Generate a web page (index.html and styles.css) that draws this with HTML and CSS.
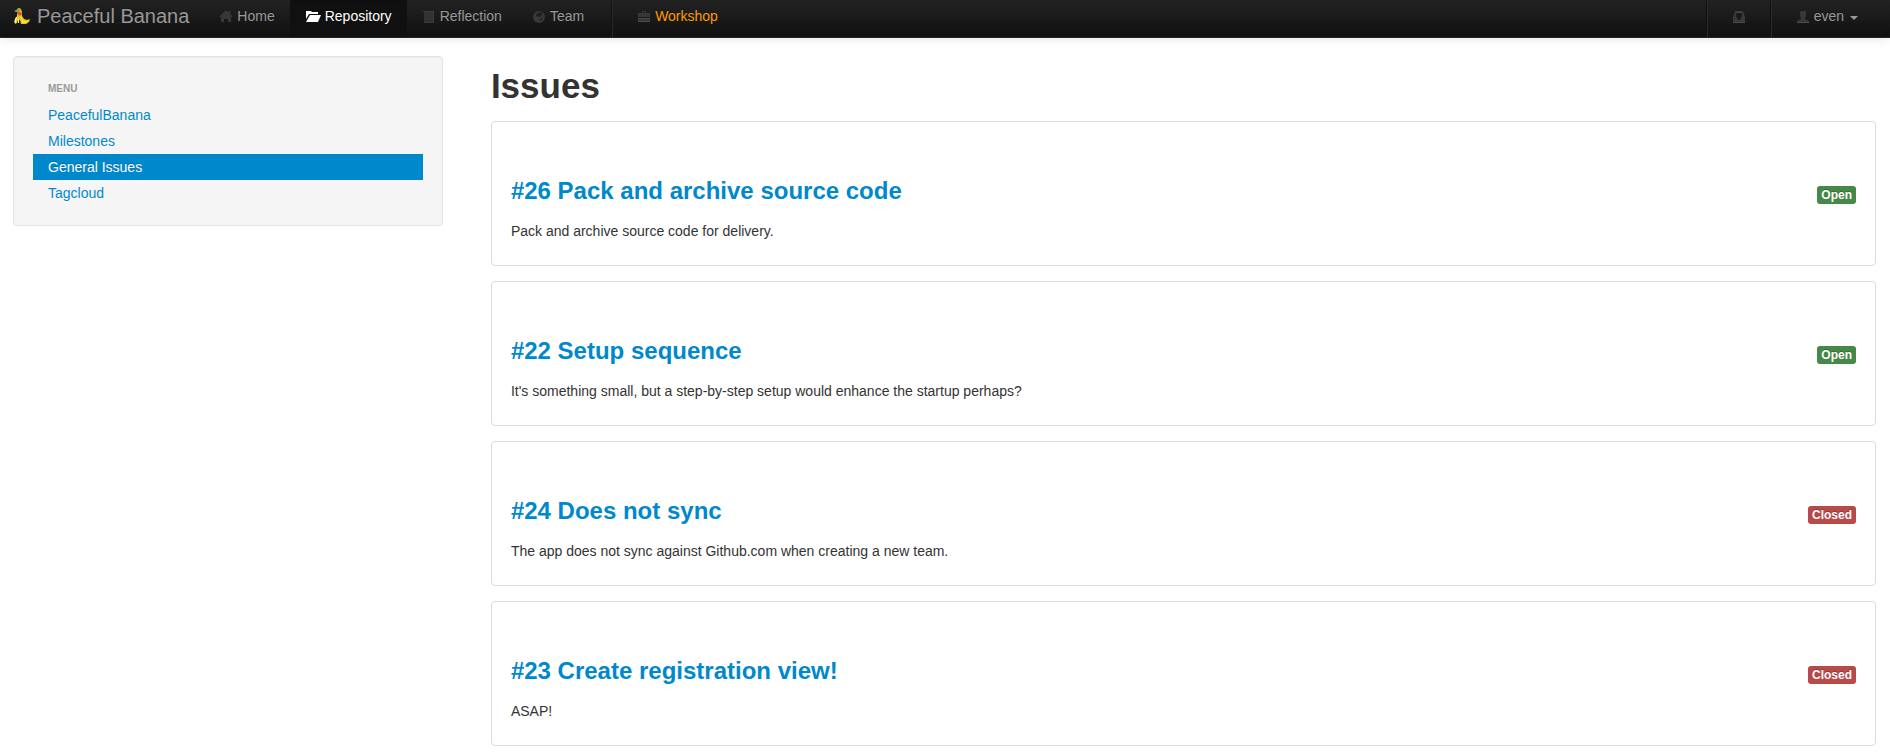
FILE: index.html
```html
<!DOCTYPE html>
<html lang="en">
<head>
<meta charset="utf-8">
<title>Peaceful Banana</title>
<link rel="stylesheet" href="styles.css">
</head>
<body>
<header class="navbar">
  <a class="brand" href="#">
    <svg class="logo" viewBox="0 0 18 18" aria-hidden="true">
      <path fill="#e8c52c" d="M4 2l2-1 2 1 1 3 0 4 2 3 3 1 3-1-1 3-3 2H8l-1-4-2 0-1 3-2 1 0-4 2-4z"/>
      <path fill="#7da53a" d="M1 4l4-2 3 1-2 2-3 0z"/>
      <path fill="#d9534a" d="M4 5h4l1 2-2 2-3-2z"/>
      <path fill="#fff3a0" d="M2 12l1-2 1 0-1 5-2 1zM5 12h1l0 4H5z"/>
      <path fill="#f9e02e" d="M8 9l2 4 3 1 3-1-3 3H9z"/>
    </svg>
    Peaceful Banana
  </a>
  <nav class="nav nav-left" aria-label="Main">
    <a class="nav-link" href="#">
      <svg class="icon" viewBox="0 0 14 14" aria-hidden="true"><path d="M7 1l2.500 2.500V2h2v3.500L14 8h-2v5H9V10H5V13H2V8H0z"/></svg>
      Home
    </a>
    <a class="nav-link active" href="#" aria-current="page">
      <svg class="icon wide" viewBox="0 0 16 14" aria-hidden="true"><path d="M1 2h5l1 1h6v2H4L1 10zM5 6h11l-3 7H1z"/></svg>
      Repository
    </a>
    <a class="nav-link" href="#">
      <svg class="icon" viewBox="0 0 14 14" aria-hidden="true"><path d="M2 3h9v10H2z" opacity=".8"/><path class="shine" d="M1 2h10v1H1zM11 2h1v12h-1zM2 13h9v1H2z" opacity=".7"/></svg>
      Reflection
    </a>
    <a class="nav-link" href="#">
      <svg class="icon" viewBox="0 0 14 14" aria-hidden="true"><circle cx="7" cy="8" r="6"/><path class="cut" d="M6 4l3-1 2 2-2 1 1 1-2 1-2-1-1 1-1-2zM8 10l3-1-1 2-2 1z"/></svg>
      Team
    </a>
    <span class="divider"></span>
    <a class="nav-link highlight" href="#">
      <svg class="icon" viewBox="0 0 14 14" aria-hidden="true"><path fill-rule="evenodd" d="M5 2h4v2h4v4H1V4h4zM6 3v1h2V3zM1 9h12v4H1z"/><path class="shine" d="M1 12h12v1H1zM1 9h12v1H1z"/></svg>
      Workshop
    </a>
  </nav>
  <nav class="nav nav-right" aria-label="Account">
    <span class="divider"></span>
    <a class="nav-link" href="#" aria-label="Inbox">
      <svg class="icon" viewBox="0 0 14 14" aria-hidden="true"><path fill-rule="evenodd" d="M3 2h8l2 6v6H1V8zM4 4v4h1v2h1v1h2v-1h1V8h1V4z"/><path class="shine" d="M4 3h6v1H4zM1 13h12v1H1z"/></svg>
    </a>
    <span class="divider"></span>
    <a class="nav-link" href="#">
      <svg class="icon" viewBox="0 0 14 14" aria-hidden="true"><path d="M5 2h4l1 1v4L9 9v1l4 2v2H1v-2l4-2V9L4 7V3z"/><path class="shine" d="M1 13h12v1H1z"/></svg>
      even
      <span class="caret"></span>
    </a>
  </nav>
</header>
<div class="layout">
  <aside class="well">
    <h2 class="menu-title">Menu</h2>
    <ul class="menu">
      <li><a href="#">PeacefulBanana</a></li>
      <li><a href="#">Milestones</a></li>
      <li><a class="active" href="#" aria-current="page">General Issues</a></li>
      <li><a href="#">Tagcloud</a></li>
    </ul>
  </aside>
  <main class="content">
    <h1>Issues</h1>
    <article class="issue">
      <header><h3><a href="#">#26 Pack and archive source code</a></h3><span class="label open">Open</span></header>
      <p>Pack and archive source code for delivery.</p>
    </article>
    <article class="issue">
      <header><h3><a href="#">#22 Setup sequence</a></h3><span class="label open">Open</span></header>
      <p>It's something small, but a step-by-step setup would enhance the startup perhaps?</p>
    </article>
    <article class="issue">
      <header><h3><a href="#">#24 Does not sync</a></h3><span class="label closed">Closed</span></header>
      <p>The app does not sync against Github.com when creating a new team.</p>
    </article>
    <article class="issue">
      <header><h3><a href="#">#23 Create registration view!</a></h3><span class="label closed">Closed</span></header>
      <p>ASAP!</p>
    </article>
  </main>
</div>
</body>
</html>
```

FILE: styles.css
```css
* { box-sizing: border-box; }
body {
  margin: 0;
  background: #fff;
  color: #333;
  font: 14px/20px "Liberation Sans", Arial, sans-serif;
}
a { color: #08c; text-decoration: none; }
h1, h2, h3, p, ul { margin: 0; padding: 0; }

.navbar {
  display: flex;
  padding: 0 17px 0 13px;
  background: linear-gradient(#222, #111);
  border-bottom: 1px solid #252525;
  box-shadow: 0 1px 10px rgba(0, 0, 0, 0.1);
}
.brand, .nav-link {
  display: flex;
  align-items: center;
  gap: 4px;
  padding: 6px 15px 11px;
  color: #999;
  text-shadow: 0 -1px 0 rgba(0, 0, 0, 0.25);
}
.brand { gap: 6px; padding: 6px 15px 11px 0; font-size: 20px; }
.logo { width: 18px; height: 18px; }
.nav { display: flex; }
.nav-right { margin-left: auto; }
.nav-link.active {
  color: #fff;
  background: #111;
  box-shadow: inset 0 3px 8px rgba(0, 0, 0, 0.125);
}
.nav-link.highlight { color: #ff9c00; }
.icon { width: 14px; height: 14px; fill: #383838; }
.icon.wide { width: 16px; }
.active .icon { fill: #fff; }
.icon .cut { fill: #1f1f1f; }
.icon .shine { fill: #4a4a4a; }
.divider {
  width: 2px;
  margin: 0 9px;
  border-left: 1px solid #111;
  border-right: 1px solid #2a2a2a;
}
.nav-left .divider { margin-left: 12px; }
.caret {
  margin: 4px 0 0 2px;
  border: 4px solid transparent;
  border-top-color: #999;
  border-bottom: 0;
}

.layout {
  display: grid;
  grid-template-columns: minmax(0, 3fr) minmax(0, 9.666fr);
  column-gap: 48px;
  align-items: start;
  padding: 18px 14px 7px 13px;
}
.well {
  padding: 19px;
  background: #f5f5f5;
  border: 1px solid #e3e3e3;
  border-radius: 4px;
  box-shadow: inset 0 1px 1px rgba(0, 0, 0, 0.05);
}
.menu-title {
  padding: 3px 15px;
  color: #999;
  font-size: 10px;
  line-height: 20px;
  text-transform: uppercase;
  text-shadow: 0 1px 0 rgba(255, 255, 255, 0.5);
}
.menu { list-style: none; }
.menu a {
  display: block;
  padding: 3px 15px;
  text-shadow: 0 1px 0 rgba(255, 255, 255, 0.5);
}
.menu .active {
  color: #fff;
  background: #08c;
  text-shadow: 0 -1px 0 rgba(0, 0, 0, 0.2);
}

h1 { margin: 10px 0 15px; font-size: 35px; line-height: 40px; }
.issue {
  padding: 49px 19px 24px;
  border: 1px solid #ddd;
  border-radius: 4px;
}
.issue + .issue { margin-top: 15px; }
.issue header {
  display: flex;
  align-items: center;
  justify-content: space-between;
  margin-bottom: 10px;
}
.issue h3 { font-size: 24px; line-height: 40px; }
.label {
  margin-top: 8px;
  padding: 2px 4px;
  border-radius: 3px;
  color: #fff;
  font-size: 12px;
  font-weight: bold;
  line-height: 14px;
  text-shadow: 0 -1px 0 rgba(0, 0, 0, 0.25);
}
.open { background: #468847; }
.closed { background: #b94a48; }
```
